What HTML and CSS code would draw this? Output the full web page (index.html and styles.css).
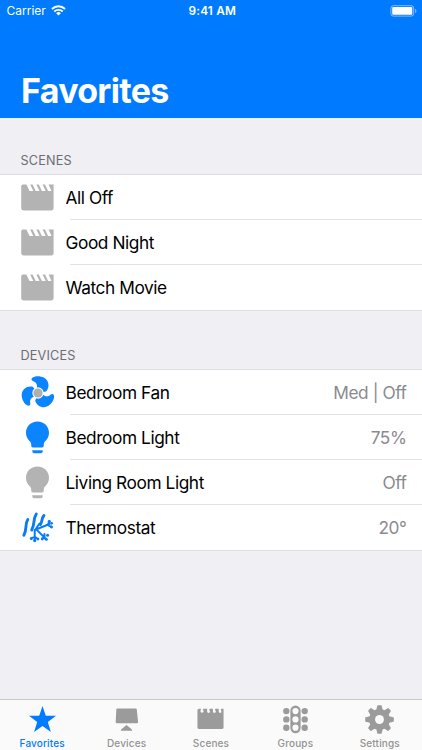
FILE: index.html
```
<!DOCTYPE html>
<html lang="en">
<head>
<meta charset="utf-8">
<title>Favorites</title>
<link rel="stylesheet" href="styles.css">
</head>
<body>
<svg class="defs" width="0" height="0" aria-hidden="true">
  <symbol id="clapper" viewBox="0 0 33 33">
    <path d="M2 3.600H5.400L8.500 9.900H12.300L9.200 3.600H11.600L14.700 9.900H18.500L15.400 3.600H17.800L20.900 9.900H24.700L21.600 3.600H24L27.100 9.900H30.500L27.600 3.600H32.600V27.300Q32.600 29.400 30.300 29.400H2.500Q.2 29.400 .2 27.300V5.600Q.2 3.600 2 3.600Z"/>
  </symbol>
  <symbol id="bulb" viewBox="0 0 33 33">
    <path d="M16.500 .5C9.700.5 5 5.500 5 11.800c0 4.200 2 7 4.200 9 1.100 1 1 2.200 1 3.600q0 2.200 2.200 2.200h8.200q2.200 0 2.200-2.200c0-1.400-.1-2.600 1-3.600 2.200-2 4.200-4.800 4.200-9C28 5.500 23.300.5 16.500.5ZM11.300 29.200h10.400v1q0 2-2 2h-6.400q-2 0-2-2Z"/>
  </symbol>
</svg>
<div class="screen">
  <header class="header">
    <div class="status">
      <div class="carrier"><span>Carrier</span>
        <svg width="15" height="11" viewBox="0 0 15 11" fill="none" stroke="#fff" stroke-width="1.8"><path d="M.9 4C4.600.3 10.400.3 14.100 4M3.300 6.500c2.300-2.300 6.100-2.300 8.400 0"/><path d="M5.100 8.200q2.400-2.200 4.800 0L7.500 10.600Z" fill="#fff" stroke="none"/></svg>
      </div>
      <span class="clock">9:41 AM</span>
      <svg class="battery" width="27" height="12" viewBox="0 0 27 12"><rect x=".9" y=".7" width="22.800" height="10.400" rx="2.500" fill="none" stroke="#fff" stroke-opacity=".5"/><rect x="2.200" y="2" width="20.100" height="7.800" rx="1" fill="#fff"/><path d="M25 4v4q1.500-.6 1.500-2T25 4Z" fill="#fff" fill-opacity=".5"/></svg>
    </div>
    <h1>Favorites</h1>
  </header>
  <main>
    <h2>SCENES</h2>
    <ul class="list">
      <li><svg class="icon off"><use href="#clapper"/></svg><div class="row"><span>All Off</span></div></li>
      <li><svg class="icon off"><use href="#clapper"/></svg><div class="row"><span>Good Night</span></div></li>
      <li><svg class="icon off"><use href="#clapper"/></svg><div class="row"><span>Watch Movie</span></div></li>
    </ul>
    <h2 class="second">DEVICES</h2>
    <ul class="list">
      <li>
        <svg class="icon on" viewBox="0 0 33 33">
          <path id="blade" d="M11.300 1.800C13.500-.2 19-.6 23.200 1.700C28.500 5 28.700 11.500 25 15.600L17 17L15.800 12C16.600 8.500 15.200 6.300 12.300 5.300C10.300 4.600 9.900 3 11.300 1.800Z"/>
          <use href="#blade" transform="rotate(120 17 17)"/>
          <use href="#blade" transform="rotate(240 17 17)"/>
          <circle cx="17" cy="17" r="5.700" fill="#fff"/><circle cx="17" cy="17" r="4.600" fill="#b0b0b0"/>
        </svg>
        <div class="row"><span>Bedroom Fan</span><span class="value">Med | Off</span></div></li>
      <li><svg class="icon on"><use href="#bulb"/></svg><div class="row"><span>Bedroom Light</span><span class="value">75%</span></div></li>
      <li><svg class="icon off"><use href="#bulb"/></svg><div class="row"><span>Living Room Light</span><span class="value">Off</span></div></li>
      <li>
        <svg class="icon frost" viewBox="0 0 33 33"><path stroke-width="2.900" d="M6.800 8.500C3.700 13 6.300 18 2.900 24.200M15.300 3C11.700 8.500 14.400 12 10.700 19M22.900 4.500C19.700 8.500 22 10 19.300 13.500"/><path stroke-width="2" d="M13.700 29V19L28.500 13M15.500 18.600L24.500 27.500M10.200 27.500L13.700 25.500L17 28.200M28.500 10.500L26.500 13.900L30.700 16.200M21 27.700L23.500 26.400V22.900M13.700 19.500L18.500 12.500"/><g fill="#087cf5" stroke="none"><circle cx="10.300" cy="27.500" r="1.500"/><circle cx="13.700" cy="29.600" r="1.600"/><circle cx="17" cy="28.100" r="1.300"/><circle cx="28.300" cy="10.300" r="1.500"/><circle cx="30.600" cy="12.300" r="1.400"/><circle cx="30.400" cy="16" r="1.400"/><circle cx="21.300" cy="28" r="1.400"/><circle cx="25.300" cy="28.200" r="1.500"/><circle cx="26.600" cy="24.300" r="1.500"/></g></svg>
        <div class="row"><span>Thermostat</span><span class="value">20°</span></div></li>
    </ul>
  </main>
  <nav class="tabs">
    <div class="tab active"><svg viewBox="0 0 30 30"><path d="M15 1L18.400 11.200H29L20.500 17.600L23.700 28L15 21.600L6.300 28L9.500 17.600L1 11.200H11.600Z"/></svg><span>Favorites</span></div>
    <div class="tab"><svg viewBox="0 0 30 30"><path d="M5.400 3.500H24.600Q25.500 3.500 25.600 4.400L27 17.700Q27.100 18.800 26 18.800H4.800Q3.700 18.800 3.800 17.700L4.500 4.400Q4.600 3.500 5.400 3.500ZM15 20.700L20 24.700Q21.800 26.700 20 26.700H10Q8.200 26.700 10 24.700Z"/></svg><span>Devices</span></div>
    <div class="tab"><svg viewBox="0 0 30 30"><path d="M3 4H5.300L4.600 5.700Q4.200 7.700 5.900 8T8 6.500Q8 5.500 7 5.500L7.500 4H11.500V6.700Q11.500 8.200 13 8.200T14.500 6.700Q14.400 5.800 13.700 5.500L14 4H17.500V6.700Q17.500 8.200 19 8.200T20.500 6.700Q20.400 5.800 19.700 5.500L20 4H23.500V6.700Q23.500 8.200 25 8.200T26.300 6.700Q26.200 5.800 25.700 5.500L26 4H28.500V22.900Q28.500 24.900 26.500 24.900H3.500Q1.500 24.900 1.500 22.900V5.600Q1.500 4 3 4Z"/></svg><span>Scenes</span></div>
    <div class="tab"><svg viewBox="0 0 30 30"><circle cx="5.500" cy="6.300" r="3.300"/><circle cx="5.500" cy="14.900" r="3.300"/><circle cx="5.500" cy="23.500" r="3.300"/><circle cx="24.500" cy="6.300" r="3.300"/><circle cx="24.500" cy="14.900" r="3.300"/><circle cx="24.500" cy="23.500" r="3.300"/><rect x="9.700" y=".6" width="10.600" height="28.600" rx="5.300"/><g fill="#fafafa"><circle cx="15" cy="6.300" r="3.200"/><circle cx="15" cy="14.900" r="3.200"/><circle cx="15" cy="23.500" r="3.200"/></g></svg><span>Groups</span></div>
    <div class="tab"><svg viewBox="0 0 30 30"><circle cx="15" cy="15" r="10.800"/><path id="tooth" d="M11.500 6L12.700.8Q12.900.2 13.500.2H16.500Q17.100.2 17.300.8L18.500 6Z"/><use href="#tooth" transform="rotate(45 15 15)"/><use href="#tooth" transform="rotate(90 15 15)"/><use href="#tooth" transform="rotate(135 15 15)"/><use href="#tooth" transform="rotate(180 15 15)"/><use href="#tooth" transform="rotate(225 15 15)"/><use href="#tooth" transform="rotate(270 15 15)"/><use href="#tooth" transform="rotate(315 15 15)"/><circle cx="15" cy="15" r="4.600" fill="#fafafa"/></svg><span>Settings</span></div>
  </nav>
</div>
</body>
</html>
```
FILE: styles.css
```
* { box-sizing: border-box; }
body { margin: 0; font-family: Inter, "Liberation Sans", sans-serif; color: #000; }
.defs { display: block; }
.screen { width: 422px; height: 750px; display: flex; flex-direction: column; background: #efeff4; overflow: hidden; }
.header { height: 118px; flex: none; background: #007aff; color: #fff; }
.status { height: 22px; display: grid; grid-template-columns: 1fr auto 1fr; align-items: center; padding: 0 5px 0 6.500px; font-size: 12px; line-height: 22px; }
.carrier { display: flex; align-items: center; gap: 5px; }
.carrier svg { margin-top: -1px; }
.clock { font-weight: 600; font-size: 11.800px; letter-spacing: .2px; padding-left: 1px; }
.battery { justify-self: end; margin-top: -1px; }
h1 { margin: 48px 0 0 21px; font-size: 34px; line-height: 42px; font-weight: 700; letter-spacing: -.7px; }
h2 { margin: 0; height: 57.400px; padding: 34px 0 0 20.500px; font-size: 12.700px; line-height: 18px; font-weight: 400; letter-spacing: .15px; color: #6d6d72; }
h2.second { height: 60.700px; padding-top: 37.500px; }
.list { list-style: none; margin: 0; padding: 0; background: #fff; box-shadow: 0 0 0 1px #dddde2; }
.list li { display: flex; height: 44.800px; padding-left: 21px; align-items: center; }
.icon { width: 33px; height: 33px; flex: none; }
.off { fill: #b3b3b3; }
.on { fill: #0a84ff; }
.frost { fill: none; stroke: #087cf5; stroke-linecap: round; stroke-linejoin: round; }
.row { flex: 1; height: 44.800px; display: flex; align-items: center; justify-content: space-between; margin-left: 15.500px; padding-right: 15.500px; padding-top: 1px; text-indent: -4px; font-size: 17.300px; letter-spacing: -.42px; border-bottom: 1px solid #e2e2e5; }
.list li:last-child .row { border-bottom-color: transparent; }
.value { color: #8a8a8f; }
.tabs { margin-top: auto; height: 51px; flex: none; display: grid; grid-template-columns: repeat(5, 1fr); border-top: 1px solid #c9c9cd; background: #fafafa; }
.tab { display: flex; flex-direction: column; align-items: center; padding-top: 4.500px; color: #929292; fill: #9b9b9b; font-size: 10px; line-height: 12px; font-weight: 500; letter-spacing: .15px; }
.tab svg { width: 29px; height: 29px; margin-bottom: 3px; }
.active { color: #007aff; fill: #007aff; }
```
